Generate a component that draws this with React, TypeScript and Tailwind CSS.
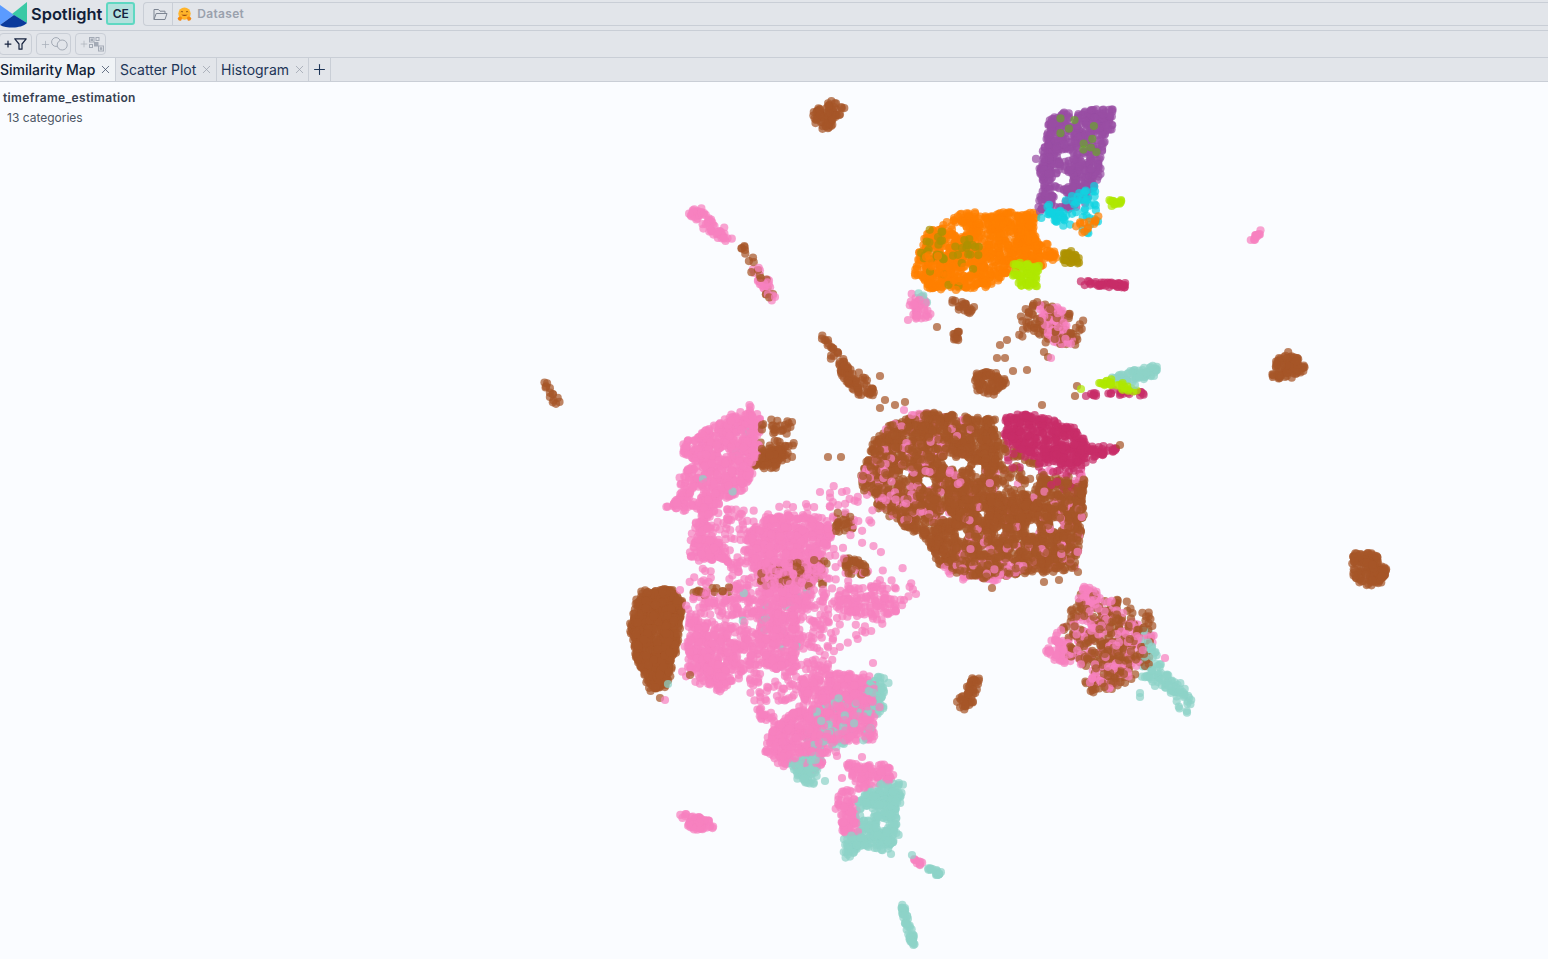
import { Plus, X } from "lucide-react";

const BROWN = "#a65628";
const PINK = "#f781bf";
const TEAL = "#8dd3c7";
const CRIMSON = "#c72c68";
const ORANGE = "#ff8000";
const OLIVE = "#ad9200";
const LIME = "#aee800";
const PURPLE = "#984ea3";
const CYAN = "#10d2e0";
const GREEN = "#6aa22e";

type Pt = [number, number];
type Blob = [string, number, Pt[]];

// density 1 is roughly enough dots to cover the shape solid
const baseBlobs: Blob[] = [
  // brown islands
  [BROWN, 1.3, [[813, 112], [832, 102], [843, 108], [834, 126], [822, 131], [814, 123]]],
  [BROWN, 1.5, [[1269, 375], [1279, 357], [1299, 355], [1306, 367], [1294, 377], [1270, 379]]],
  [BROWN, 1.6, [[1353, 553], [1374, 553], [1388, 570], [1383, 584], [1361, 585], [1351, 575]]],
  [BROWN, 1.2, [[954, 705], [966, 692], [971, 677], [980, 679], [976, 697], [965, 712], [955, 709]]],
  [BROWN, 2.2, [[641, 591], [671, 589], [682, 601], [678, 640], [667, 686], [651, 691], [638, 665], [630, 625]]],
  [BROWN, 0.9, [[544, 384], [548, 383], [561, 400], [556, 405], [552, 403]]],
  [BROWN, 1.1, [[819, 335], [825, 335], [850, 369], [866, 379], [878, 396], [859, 396], [843, 378]]],
  [BROWN, 1.15, [[880, 430], [923, 412], [997, 420], [1000, 473], [1085, 480], [1082, 527], [1075, 568], [980, 578], [938, 566], [925, 537], [885, 515], [859, 483], [872, 447]]],
  [BROWN, 0.5, [[965, 490], [1083, 495], [1083, 528], [945, 530]]],
  [BROWN, 0.5, [[1002, 440], [1040, 465], [1000, 475]]],
  [BROWN, 1.4, [[762, 450], [786, 446], [793, 455], [772, 470], [754, 468]]],
  [BROWN, 0.25, [[757, 420], [793, 419], [798, 450], [760, 450]]],
  [BROWN, 1.1, [[972, 375], [1000, 370], [1008, 380], [998, 394], [977, 392]]],
  [BROWN, 0.4, [[1037, 297], [1083, 320], [1077, 347], [1043, 343], [1010, 333], [1017, 320]]],
  [BROWN, 0.9, [[951, 298], [976, 304], [969, 316], [954, 307]]],
  [BROWN, 1.2, [[952, 329], [960, 329], [958, 345], [954, 345]]],
  [BROWN, 0.35, [[757, 557], [827, 562], [826, 587], [760, 585]]],
  [BROWN, 1, [[844, 558], [865, 559], [870, 575], [847, 575]]],
  [BROWN, 0.7, [[835, 512], [855, 515], [852, 530], [835, 532]]],
  [BROWN, 0.45, [[1063, 627], [1083, 590], [1107, 597], [1147, 607], [1155, 637], [1147, 667], [1127, 683], [1093, 693], [1083, 683], [1093, 667], [1070, 660]]],
  [BROWN, 0.3, [[735, 240], [745, 240], [776, 295], [768, 300]]],
  [BROWN, 0.6, [[690, 590], [730, 586], [735, 592], [695, 597]]],
  // pink
  [PINK, 1.2, [[687, 211], [700, 209], [718, 226], [731, 241], [722, 239], [693, 222]]],
  [PINK, 0.5, [[755, 262], [778, 292], [772, 301], [747, 267]]],
  [PINK, 1.6, [[1247, 242], [1257, 233], [1262, 235], [1250, 246]]],
  [PINK, 1.5, [[680, 814], [690, 813], [715, 822], [713, 829], [695, 830], [681, 822]]],
  [PINK, 1.1, [[683, 443], [727, 417], [752, 408], [760, 420], [758, 460], [747, 487], [720, 503], [713, 517], [700, 513], [665, 507], [680, 497], [680, 473], [697, 463], [683, 453]]],
  [PINK, 1.1, [[700, 513], [713, 517], [710, 530], [730, 560], [707, 563], [690, 557], [692, 530]]],
  [PINK, 1.1, [[745, 533], [770, 517], [807, 513], [833, 530], [820, 560], [827, 573], [800, 587], [760, 580], [747, 557]]],
  [PINK, 0.9, [[760, 585], [813, 590], [797, 640], [793, 673], [767, 670], [760, 633]]],
  [PINK, 0.9, [[687, 613], [717, 630], [740, 647], [743, 677], [720, 693], [687, 670]]],
  [PINK, 0.7, [[833, 590], [887, 583], [890, 600], [907, 597], [897, 613], [853, 617], [827, 610]]],
  [PINK, 1.1, [[763, 747], [777, 723], [803, 703], [800, 683], [833, 673], [873, 673], [880, 707], [873, 720], [875, 740], [833, 743], [820, 767], [805, 770], [787, 767], [765, 753]]],
  [PINK, 0.8, [[750, 706], [772, 712], [775, 722], [762, 722]]],
  [PINK, 1.1, [[843, 763], [887, 765], [895, 780], [860, 790]]],
  [PINK, 1, [[840, 790], [853, 790], [860, 832], [845, 838], [837, 810]]],
  [PINK, 2, [[914, 858], [924, 863], [922, 867], [913, 861]]],
  [PINK, 0.8, [[1042, 650], [1063, 627], [1075, 660], [1060, 665]]],
  [PINK, 0.9, [[910, 292], [928, 300], [932, 317], [917, 320], [910, 310]]],
  [PINK, 0.9, [[1037, 303], [1063, 310], [1073, 345], [1050, 342]]],
  // pink links between the big lobes
  [PINK, 0.3, [[725, 505], [750, 515], [750, 590], [725, 590]]],
  [PINK, 0.45, [[735, 590], [765, 590], [765, 680], [740, 670]]],
  [PINK, 0.35, [[700, 590], [740, 595], [735, 640], [695, 620]]],
  [PINK, 0.35, [[810, 590], [835, 590], [828, 625], [810, 640]]],
  [PINK, 0.3, [[790, 640], [835, 630], [830, 680], [790, 695]]],
  [PINK, 0.25, [[745, 675], [800, 675], [790, 705], [752, 705]]],
  [PINK, 0.08, [[690, 515], [855, 490], [918, 592], [840, 665], [682, 690]]],
  // pink through the brown
  [PINK, 0.2, [[880, 430], [923, 412], [980, 420], [965, 470], [945, 530], [885, 515], [859, 483]]],
  [PINK, 0.1, [[965, 470], [1085, 470], [1078, 568], [940, 568]]],
  [PINK, 0.45, [[940, 558], [1040, 564], [1000, 582], [950, 577]]],
  [PINK, 0.35, [[860, 460], [885, 450], [900, 510], [870, 510]]],
  [PINK, 0.35, [[1063, 627], [1107, 597], [1155, 637], [1127, 683], [1093, 693]]],
  [PINK, 1, [[1083, 583], [1103, 595], [1092, 610], [1078, 600]]],
  // teal
  [TEAL, 1.5, [[1110, 379], [1140, 366], [1159, 367], [1154, 376], [1126, 383]]],
  [TEAL, 0.65, [[1142, 625], [1166, 670], [1193, 698], [1185, 716], [1172, 700], [1146, 680]]],
  [TEAL, 1.1, [[872, 675], [889, 677], [881, 700], [887, 711], [878, 715], [866, 700]]],
  [TEAL, 1.3, [[788, 762], [812, 752], [825, 737], [815, 785], [798, 781]]],
  [TEAL, 1.3, [[857, 797], [887, 781], [904, 784], [902, 797], [896, 813], [899, 840], [883, 852], [863, 846], [843, 861], [844, 840], [860, 830]]],
  [TEAL, 2.4, [[899, 905], [904, 905], [916, 944], [912, 947]]],
  [TEAL, 2.2, [[926, 866], [942, 872], [939, 877], [926, 871]]],
  [TEAL, 0.2, [[815, 705], [880, 680], [868, 738], [800, 760]]],
  [TEAL, 0.02, [[735, 590], [812, 590], [790, 690], [750, 700]]],
  [TEAL, 0.08, [[1150, 625], [1168, 665], [1140, 680]]],
  [TEAL, 0.012, [[683, 443], [760, 420], [745, 490], [700, 513]]],
  [TEAL, 0.9, [[918, 292], [928, 295], [928, 302], [920, 302]]],
  [CRIMSON, 0.3, [[1005, 440], [1085, 450], [1075, 495], [1040, 480], [1005, 470]]],
];

const topBlobs: Blob[] = [
  [ORANGE, 1.1, [[957, 211], [1037, 214], [1033, 233], [1057, 250], [1053, 266], [1013, 270], [990, 286], [960, 289], [930, 289], [913, 272], [921, 250], [929, 231], [953, 221]]],
  [OLIVE, 0.22, [[928, 227], [977, 240], [987, 263], [950, 263], [917, 257]]],
  [OLIVE, 0.04, [[920, 260], [990, 265], [960, 290], [925, 285]]],
  [ORANGE, 0.15, [[917, 255], [990, 262], [965, 290], [925, 288]]],
  [OLIVE, 1.5, [[1060, 252], [1082, 253], [1079, 263], [1061, 264]]],
  [LIME, 1.2, [[1014, 263], [1039, 265], [1035, 287], [1022, 290], [1013, 277]]],
  [LIME, 1.6, [[1108, 200], [1123, 199], [1123, 203], [1109, 207]]],
  [CRIMSON, 1.9, [[1081, 281], [1126, 283], [1126, 288], [1081, 285]]],
  [CRIMSON, 1, [[1003, 418], [1030, 413], [1074, 428], [1090, 447], [1119, 443], [1119, 450], [1086, 461], [1070, 468], [1040, 457], [1003, 440]]],
  [CRIMSON, 1, [[1087, 392], [1144, 391], [1144, 395], [1091, 396]]],
  [LIME, 0.9, [[1098, 381], [1112, 379], [1141, 390], [1137, 393], [1101, 387]]],
  [PURPLE, 1, [[1047, 121], [1060, 111], [1112, 109], [1116, 122], [1102, 150], [1099, 180], [1086, 206], [1060, 209], [1038, 212], [1041, 177], [1039, 163], [1044, 147], [1046, 133]]],
  [CYAN, 0.25, [[1030, 213], [1053, 203], [1093, 180], [1100, 223], [1087, 237], [1070, 227], [1040, 223]]],
  [CYAN, 0.5, [[1045, 212], [1072, 208], [1074, 220], [1050, 222]]],
  [ORANGE, 0.5, [[1073, 225], [1099, 216], [1097, 225], [1085, 234], [1076, 233]]],
  [GREEN, 0.05, [[1052, 117], [1115, 113], [1100, 155], [1056, 146]]],
];

// white gaps inside the dense clusters
const holes: [number, number, number][] = [
  [950, 462, 8], [962, 463, 8], [978, 470, 7], [927, 482, 8], [962, 535, 7], [1033, 528, 7.5], [1057, 525, 7],
  [982, 513, 5.5], [870, 503, 7], [1012, 484, 5], [1028, 488, 5], [1000, 490, 4.5], [945, 515, 4.5],
  [1000, 533, 5], [1020, 540, 4], [905, 470, 4], [1060, 490, 4],
  [1063, 180, 9], [1067, 155, 6], [1060, 195, 6], [1085, 130, 0], [960, 230, 7], [967, 271, 5], [945, 250, 4],
  [725, 452, 5], [735, 525, 6], [733, 545, 6], [736, 500, 5], [724, 575, 5],
  [815, 600, 5], [808, 655, 6], [822, 645, 5], [752, 622, 4], [675, 690, 5],
  [867, 813, 7], [882, 825, 6], [812, 700, 4],
];

// patches where the dots thin out
const thin: [number, number, number, number][] = [
  [1018, 480, 22, 0.6], [1050, 495, 14, 0.3], [900, 480, 14, 0.35], [880, 500, 20, 0.35],
  [840, 600, 14, 0.3], [870, 590, 12, 0.3],
];

const strays: [string, number, number][] = [
  [BROWN, 828, 457], [BROWN, 841, 457], [BROWN, 1000, 345], [BROWN, 997, 358], [BROWN, 1007, 340], [BROWN, 1044, 582],
  [BROWN, 1059, 580], [BROWN, 992, 588], [BROWN, 1077, 386], [BROWN, 1075, 396], [BROWN, 1042, 405], [BROWN, 865, 378],
  [BROWN, 880, 376], [BROWN, 1027, 370], [BROWN, 1005, 358], [BROWN, 1078, 572], [BROWN, 1013, 371], [BROWN, 1048, 357],
  [PINK, 916, 594], [PINK, 873, 663], [PINK, 837, 756], [PINK, 862, 757], [PINK, 842, 778], [PINK, 820, 492],
  [PINK, 830, 493], [PINK, 842, 492], [PINK, 806, 504], [PINK, 793, 507], [PINK, 836, 752], [PINK, 1165, 658],
  [TEAL, 825, 781], [TEAL, 891, 854], [TEAL, 912, 855], [TEAL, 1140, 697], [TEAL, 1140, 693], [TEAL, 1135, 385],
  [LIME, 1081, 389], [CRIMSON, 1086, 396], [BROWN, 937, 327], [BROWN, 1044, 352], [PINK, 908, 320], [PINK, 1051, 358],
  [BROWN, 885, 400], [BROWN, 895, 405], [BROWN, 905, 402], [BROWN, 880, 408], [PINK, 904, 410], [PINK, 912, 415],
  [BROWN, 1120, 445], [BROWN, 762, 425], [BROWN, 792, 422], [BROWN, 785, 425], [BROWN, 775, 430], [BROWN, 745, 250],
  [PINK, 775, 297], [PINK, 680, 590], [BROWN, 660, 698], [PINK, 665, 700], [TEAL, 668, 684], [BROWN, 690, 675],
];

function mulberry(seed: number) {
  return () => {
    seed = (seed + 0x6d2b79f5) | 0;
    let t = Math.imul(seed ^ (seed >>> 15), 1 | seed);
    t = (t + Math.imul(t ^ (t >>> 7), 61 | t)) ^ t;
    return ((t ^ (t >>> 14)) >>> 0) / 4294967296;
  };
}

function inside(x: number, y: number, poly: Pt[]) {
  let hit = false;
  for (let i = 0, j = poly.length - 1; i < poly.length; j = i++) {
    const [xi, yi] = poly[i];
    const [xj, yj] = poly[j];
    if (yi > y !== yj > y && x < ((xj - xi) * (y - yi)) / (yj - yi) + xi) hit = !hit;
  }
  return hit;
}

function area(poly: Pt[]) {
  let a = 0;
  for (let i = 0, j = poly.length - 1; i < poly.length; j = i++) {
    a += poly[j][0] * poly[i][1] - poly[i][0] * poly[j][1];
  }
  return Math.abs(a) / 2;
}

const rnd = mulberry(20240611);

function sample(blobs: Blob[]) {
  const out: [string, number, number][] = [];
  for (const [color, density, poly] of blobs) {
    const xs = poly.map((p) => p[0]);
    const ys = poly.map((p) => p[1]);
    const minX = Math.min(...xs);
    const maxX = Math.max(...xs);
    const minY = Math.min(...ys);
    const maxY = Math.max(...ys);
    const count = Math.max(4, Math.round((area(poly) / 9.5) * density));
    // narrow strips keep their edge, big clusters get a rough one
    const spread = area(poly) > 400 ? 1.1 : 0.4;
    let made = 0;
    let tries = 0;
    while (made < count && tries < count * 60) {
      tries++;
      const x0 = minX + rnd() * (maxX - minX);
      const y0 = minY + rnd() * (maxY - minY);
      if (!inside(x0, y0, poly)) continue;
      const wide = rnd() < 0.02 ? 4 : spread;
      const x = x0 + (rnd() + rnd() - 1) * wide * 2;
      const y = y0 + (rnd() + rnd() - 1) * wide * 2;
      made++;
      if (holes.some(([hx, hy, hr]) => (hx - x) ** 2 + (hy - y) ** 2 < hr * hr)) continue;
      if (thin.some(([hx, hy, hr, p]) => (hx - x) ** 2 + (hy - y) ** 2 < hr * hr && rnd() < p)) continue;
      out.push([color, x, y]);
    }
  }
  return out;
}

function shuffle<T>(list: T[]) {
  for (let i = list.length - 1; i > 0; i--) {
    const j = Math.floor(rnd() * (i + 1));
    [list[i], list[j]] = [list[j], list[i]];
  }
  return list;
}

const dots = [...shuffle(sample(baseBlobs)), ...sample(topBlobs), ...strays];

function Logo() {
  return (
    <svg width="28" height="28" viewBox="0 0 28 28" className="shrink-0">
      <path d="M0 5 L14 15 L0 25 Z" fill="#5b9bff" />
      <path d="M27 2 L27 23 L12 14 Z" fill="#39c9a5" />
      <path d="M14 15 L27 23 C24 26 18 27.5 13 27.5 C8 27.5 3 27 0 25 Z" fill="#0a3a9c" />
    </svg>
  );
}

function HugFace() {
  return (
    <svg width="15" height="15" viewBox="0 0 15 15">
      <circle cx="7.5" cy="6.6" r="6.2" fill="#ffb42a" />
      <path d="M3.8 5 q1.1 -1.2 2.2 0 M9 5 q1.1 -1.2 2.2 0" stroke="#7a3d10" strokeWidth="0.8" fill="none" />
      <path d="M4.3 7.4 q3.2 3 6.4 0 q-3.2 0.9 -6.4 0" fill="#9a4a12" />
      <path d="M0.6 11.6 q1.4 -3 4 -1.6 q1 1.2 -0.4 3.6 q-2.6 1 -3.6 -2 Z" fill="#f4870f" />
      <path d="M14.4 11.6 q-1.4 -3 -4 -1.6 q-1 1.2 0.4 3.6 q2.6 1 3.6 -2 Z" fill="#f4870f" />
    </svg>
  );
}

function FilterIcon() {
  return (
    <svg width="13" height="12" viewBox="0 0 13 12" fill="none" stroke="#16233f" strokeWidth="1.2" strokeLinejoin="round">
      <path d="M0.8 0.8 H12.2 L8 6 V11.2 H5 V6 Z" />
    </svg>
  );
}

function CirclesIcon() {
  return (
    <svg width="17" height="14" viewBox="0 0 17 14" fill="none" stroke="#a3aab5" strokeWidth="1">
      <circle cx="5" cy="5" r="4.4" />
      <circle cx="11.2" cy="8" r="5" fill="#e2e5ea" />
    </svg>
  );
}

function ClusterIcon() {
  return (
    <svg width="15" height="15" viewBox="0 0 15 15" fill="none" stroke="#a3aab5" strokeWidth="1" className="shrink-0">
      <rect x="0.5" y="0.5" width="4.5" height="4.5" />
      <rect x="2" y="2" width="1.5" height="1.5" fill="#a3aab5" />
      <rect x="7" y="0.5" width="3" height="3" />
      <rect x="0.5" y="7.5" width="3" height="3" />
      <rect x="5.5" y="5.5" width="3.5" height="3.5" fill="#a3aab5" />
      <rect x="9.5" y="9" width="5" height="5" />
      <rect x="11.3" y="10.8" width="1.5" height="1.5" fill="#a3aab5" />
    </svg>
  );
}

function Tab({ label, active, width }: { label: string; active?: boolean; width: string }) {
  return (
    <div
      className={
        "flex items-center gap-[4px] h-full border-r border-[#c9ced6] " +
        width +
        (active ? " bg-[#f0f3f6] font-medium text-[#111f38]" : " text-[#1d3557] pl-[4px]")
      }
    >
      <span>{label}</span>
      <X size={13} strokeWidth={1.4} className={active ? "text-[#3b4a63]" : "text-[#9aa1ad]"} />
    </div>
  );
}

export default function App() {
  return (
    <div className="w-[1548px] h-[959px] overflow-hidden flex flex-col bg-[#fafcff] font-['Inter',sans-serif]">
      <div className="h-[31px] shrink-0 bg-[#e2e5ea] border-b border-[#c9ced6] flex items-start">
        <Logo />
        <span className="ml-[3px] mt-[4px] text-[16.4px] leading-5 font-semibold text-[#111f38]">Spotlight</span>
        <span className="ml-[4px] mt-[2px] w-[29px] h-[23px] flex items-center justify-center rounded-[3px] border-2 border-[#5fd8c2] bg-[#b3e1dd] text-xs font-semibold text-[#16233f]">
          CE
        </span>
        <div className="ml-[8px] mt-[2px] flex-1 h-[24px] flex items-center rounded-l border border-r-0 border-[#c9ced6]">
          <div className="w-[29px] h-full flex items-center justify-end pr-[4px] border-r border-[#c9ced6]">
            <svg width="15" height="13" viewBox="0 0 15 13" fill="none" stroke="#7d8592" strokeWidth="1">
              <path d="M1 11.5 V1.5 H5.5 L7 3.2 H12 V5.5 M1 11.5 H12 L14 5.5 H3.2 L1 11.5 Z" />
            </svg>
          </div>
          <div className="ml-[4px] flex items-center gap-[5px]">
            <HugFace />
            <span className="text-xs font-semibold tracking-[0.3px] text-[#9aa1ad]">Dataset</span>
          </div>
        </div>
      </div>
      <div className="h-[27px] shrink-0 bg-[#e2e5ea] border-b border-[#c9ced6] flex items-center gap-[4px]">
        <div className="ml-[-1px] w-[33px] h-[22px] flex items-center pl-[3px] rounded border border-[#c9ced6] text-[#16233f]">
          <Plus size={10} strokeWidth={3} />
          <span className="ml-[1px]">
            <FilterIcon />
          </span>
        </div>
        <div className="w-[35px] h-[22px] flex items-center pl-[3px] rounded border border-[#c9ced6]">
          <Plus size={11} strokeWidth={1.5} className="text-[#a3aab5] shrink-0" />
          <CirclesIcon />
        </div>
        <div className="w-[31px] h-[22px] flex items-center pl-[3px] rounded border border-[#c9ced6]">
          <Plus size={10} strokeWidth={1.5} className="text-[#a3aab5] shrink-0" />
          <ClusterIcon />
        </div>
      </div>
      <div className="h-[24px] shrink-0 bg-[#e2e5ea] border-b border-[#c9ced6] flex items-center text-sm">
        <Tab label="Similarity Map" active width="w-[116px]" />
        <Tab label="Scatter Plot" width="w-[101px]" />
        <Tab label="Histogram" width="w-[92px]" />
        <div className="w-[22px] h-full flex items-center justify-center border-r border-[#c9ced6] text-[#1d3557]">
          <Plus size={17} strokeWidth={1.5} />
        </div>
      </div>
      <div className="relative flex-1 min-h-0">
        <svg viewBox="0 82 1548 877" className="block w-full h-full">
          {dots.map(([color, x, y], i) => (
            <circle key={i} cx={x.toFixed(1)} cy={y.toFixed(1)} r="4.1" fill={color} fillOpacity="0.72" />
          ))}
        </svg>
        <div className="absolute left-[3px] top-[8px] text-xs leading-4 font-semibold tracking-[0.35px] text-[#374151]">
          timeframe_estimation
        </div>
        <div className="absolute left-[7px] top-[28px] text-xs leading-4 text-[#4b5563]">13 categories</div>
      </div>
    </div>
  );
}
